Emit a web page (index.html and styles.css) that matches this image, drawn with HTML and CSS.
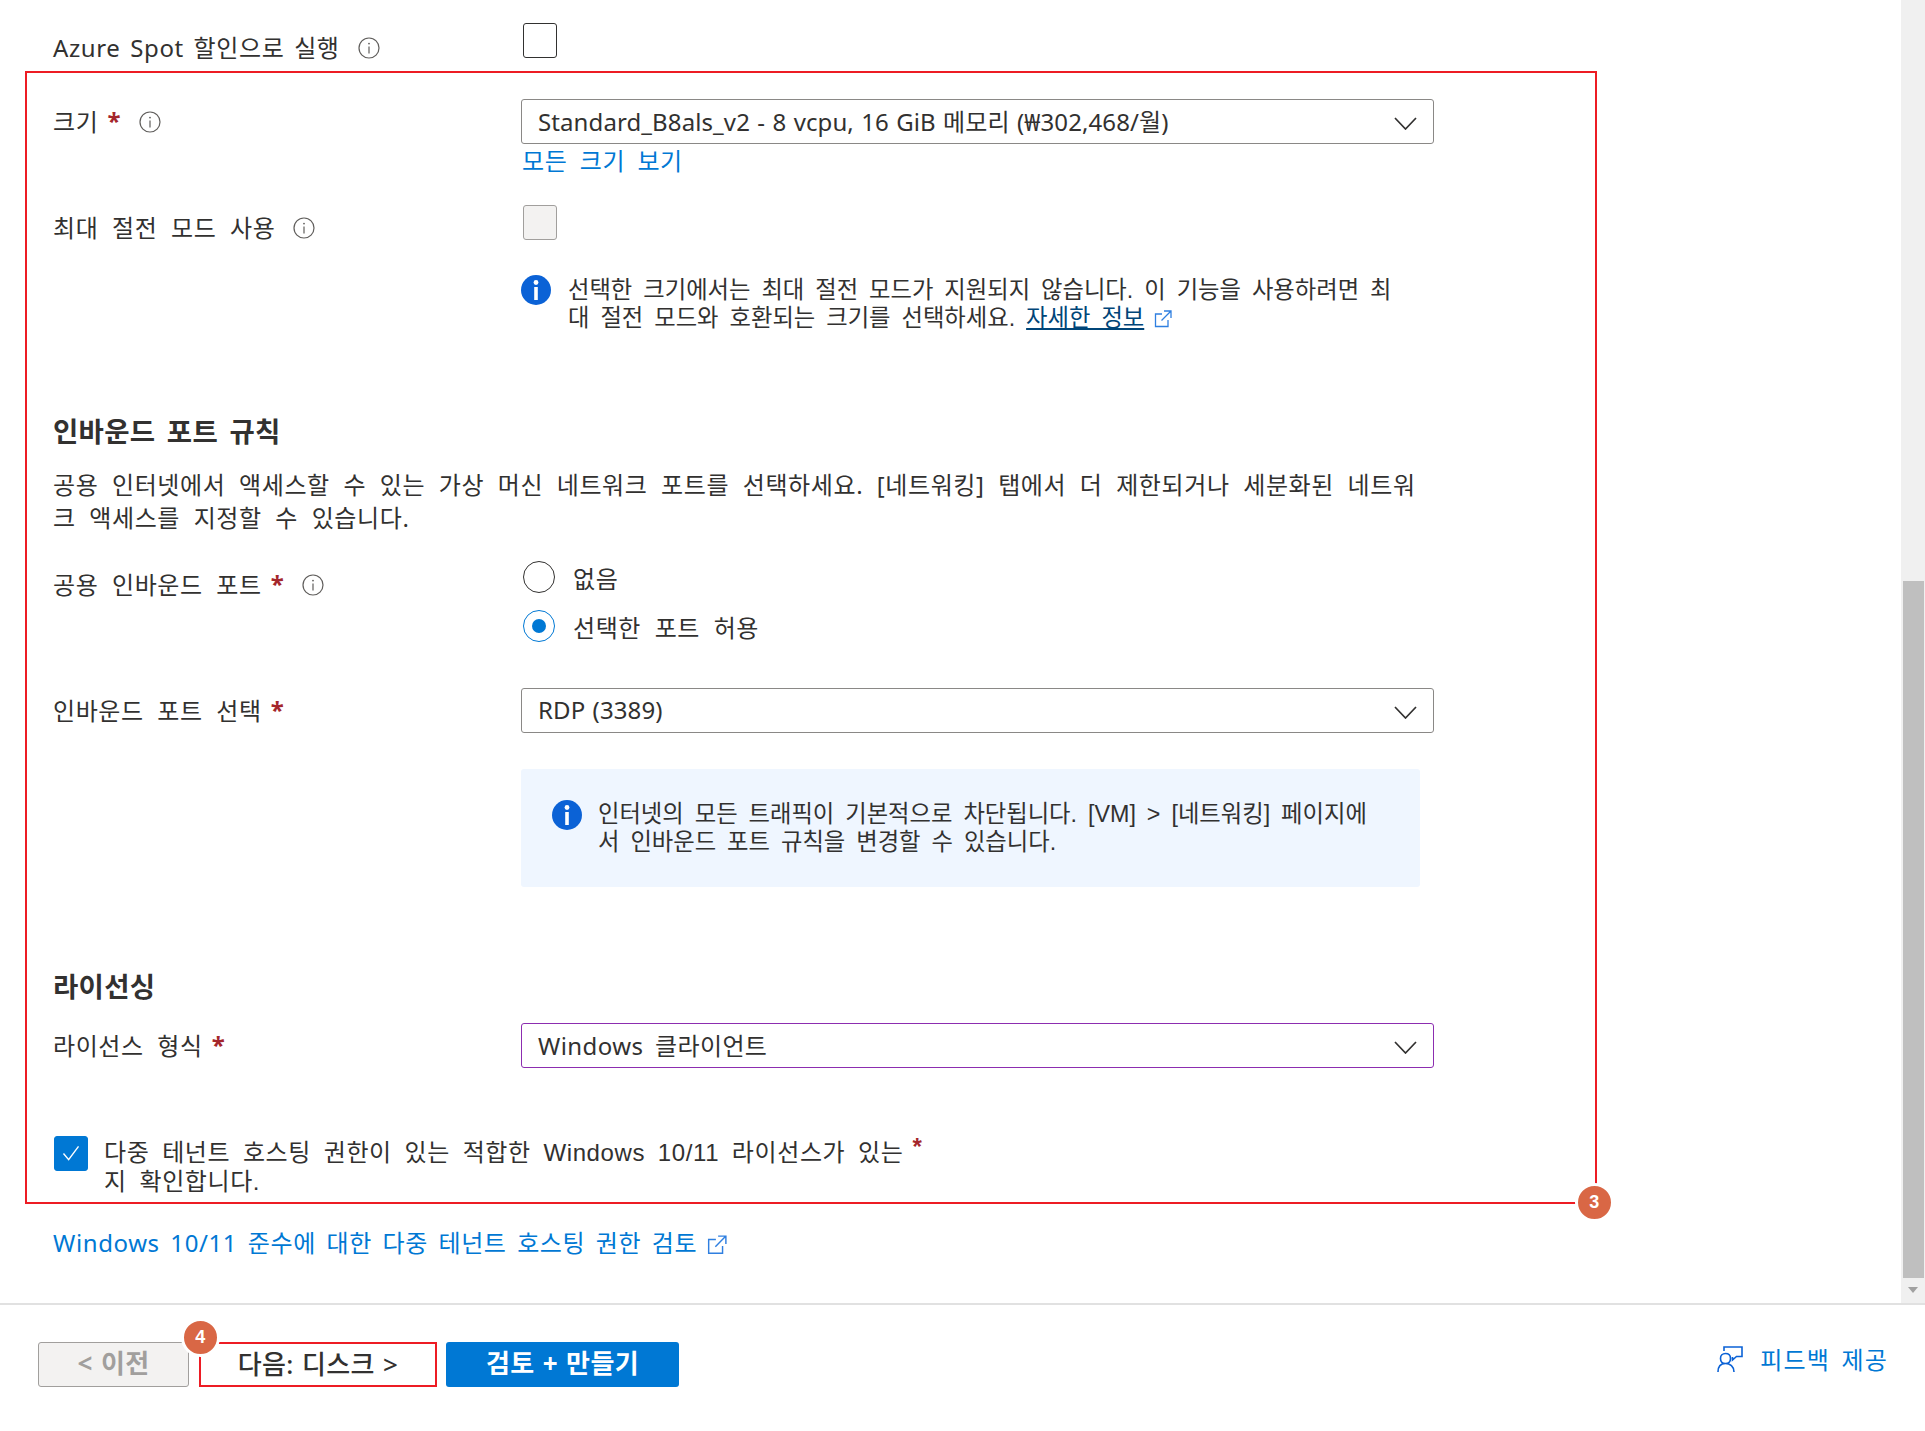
FILE: index.html
```html
<!DOCTYPE html>
<html lang="ko">
<head>
  <meta charset="UTF-8">
  <title>가상 머신 만들기</title>
  <link rel="stylesheet" href="styles.css">
</head>
<body>
  <svg class="icon-defs" width="0" height="0">
    <symbol id="tip" viewBox="0 0 22 22">
      <circle cx="11" cy="11" r="10" fill="none" stroke="#605e5c" stroke-width="1.2"/>
      <circle cx="11" cy="6.6" r="0.9" fill="#605e5c"/>
      <path d="M11 9.5V16.5" stroke="#605e5c" stroke-width="1.2"/>
    </symbol>
    <symbol id="chevron" viewBox="0 0 23 13">
      <path d="M1 1L11.500 12L22 1" fill="none" stroke="#323130" stroke-width="1.700"/>
    </symbol>
    <symbol id="info" viewBox="0 0 30 30">
      <circle cx="15" cy="15" r="15" fill="#0b62d6"/>
      <circle cx="15" cy="7.500" r="2.400" fill="#fff"/>
      <path d="M15 12V25" stroke="#fff" stroke-width="3.600"/>
    </symbol>
    <symbol id="external" viewBox="0 0 18 18">
      <path d="M8 4H1.500V16.500H14V10M10 1H17V8M17 1L7.500 10.500" fill="none" stroke="currentColor" stroke-width="1.300"/>
    </symbol>
  </svg>

  <div class="page">
    <main class="content">
      <div class="row row-spot">
        <div class="label">Azure Spot 할인으로 실행<svg class="tip"><use href="#tip"/></svg></div>
        <div class="field"><span class="check"></span></div>
      </div>

      <div class="row row-size">
        <div class="label">크기<span class="req">*</span><svg class="tip"><use href="#tip"/></svg></div>
        <div class="field">
          <div class="select">Standard_B8als_v2 - 8 vcpu, 16 GiB 메모리 (₩302,468/월)<svg class="chevron"><use href="#chevron"/></svg></div>
          <a class="link see-all">모든 크기 보기</a>
        </div>
      </div>

      <div class="row row-hibernate">
        <div class="label">최대 절전 모드 사용<svg class="tip"><use href="#tip"/></svg></div>
        <div class="field"><span class="check disabled"></span></div>
      </div>

      <div class="row row-note">
        <div></div>
        <div class="note">
          <svg class="info"><use href="#info"/></svg>
          <p>선택한 크기에서는 최대 절전 모드가 지원되지 않습니다. 이 기능을 사용하려면 최<br>대 절전 모드와 호환되는 크기를 선택하세요. <a class="more">자세한 정보</a><svg class="ext"><use href="#external"/></svg></p>
        </div>
      </div>

      <h2 class="heading heading-ports">인바운드 포트 규칙</h2>
      <p class="desc">공용 인터넷에서 액세스할 수 있는 가상 머신 네트워크 포트를 선택하세요. [네트워킹] 탭에서 더 제한되거나 세분화된 네트워<br>크 액세스를 지정할 수 있습니다.</p>

      <div class="row row-public">
        <div class="label">공용 인바운드 포트<span class="req">*</span><svg class="tip"><use href="#tip"/></svg></div>
        <div class="field radios">
          <div class="radio-line"><span class="radio"></span>없음</div>
          <div class="radio-line"><span class="radio on"></span>선택한 포트 허용</div>
        </div>
      </div>

      <div class="row row-select-port">
        <div class="label">인바운드 포트 선택<span class="req">*</span></div>
        <div class="field">
          <div class="select">RDP (3389)<svg class="chevron"><use href="#chevron"/></svg></div>
          <div class="banner">
            <svg class="info"><use href="#info"/></svg>
            <p>인터넷의 모든 트래픽이 기본적으로 차단됩니다. [VM] &gt; [네트워킹] 페이지에<br>서 인바운드 포트 규칙을 변경할 수 있습니다.</p>
          </div>
        </div>
      </div>

      <h2 class="heading heading-license">라이선싱</h2>

      <div class="row row-license">
        <div class="label">라이선스 형식<span class="req">*</span></div>
        <div class="field">
          <div class="select touched">Windows 클라이언트<svg class="chevron"><use href="#chevron"/></svg></div>
        </div>
      </div>

      <div class="confirm">
        <span class="check checked">
          <svg viewBox="0 0 34 34"><path d="M9 17.500L14.500 24L25 10" fill="none" stroke="#fff" stroke-width="1.500"/></svg>
        </span>
        <p>다중 테넌트 호스팅 권한이 있는 적합한 Windows 10/11 라이선스가 있는<span class="req req-up">*</span><br>지 확인합니다.</p>
      </div>

      <a class="link review-link">Windows 10/11 준수에 대한 다중 테넌트 호스팅 권한 검토<svg class="ext"><use href="#external"/></svg></a>

      <div class="callout"></div>
      <span class="badge badge-three">3</span>

      <div class="scrollbar">
        <div class="thumb"></div>
        <div class="arrow"></div>
      </div>
    </main>

    <footer class="footer">
      <button class="btn prev">&lt; 이전</button>
      <button class="btn next">다음: 디스크 &gt;</button>
      <button class="btn primary">검토 + 만들기</button>
      <a class="feedback">
        <svg viewBox="0 0 26 26" class="feedback-icon">
          <path d="M7 5V1H25V10.500H19.500L15.500 14V11M1 26C1 20.500 4 17.500 8.500 17.500C13 17.500 17 20.500 17 26M8.500 17.500C11.500 17.500 13.500 15.500 13.500 12.500C13.500 9.500 11.500 7.500 8.500 7.500C5.500 7.500 3.500 9.500 3.500 12.500C3.500 15.500 5.500 17.500 8.500 17.500Z" fill="none" stroke="#0b62d6" stroke-width="1.600"/>
        </svg>
        <span class="feedback-text">피드백 제공</span>
      </a>
      <span class="badge badge-four">4</span>
    </footer>
  </div>
</body>
</html>
```

FILE: styles.css
```css
* {
  box-sizing: border-box;
}

html, body {
  margin: 0;
  height: 100%;
  background-color: #fff;
}

body {
  font-family: "Noto Sans", "Noto Sans CJK KR", sans-serif;
  font-size: 24px;
  letter-spacing: 0.6px;
  word-spacing: 6.8px;
  color: #323130;
  overflow: hidden;
}

p, h2 {
  margin: 0;
}

.icon-defs {
  position: absolute;
}

.page {
  display: flex;
  flex-direction: column;
  height: 1431px;
}

.content {
  position: relative;
  height: 1303px;
  padding-left: 53px;
  overflow: hidden;
}

/* form rows */
.row {
  display: grid;
  grid-template-columns: 468px 913px;
}

.label {
  display: flex;
  align-items: center;
  height: 30px;
  padding-bottom: 4px;
  white-space: nowrap;
}

.req {
  color: #a4262c;
  font-weight: 700;
  margin-left: 9px;
}

.tip {
  width: 22px;
  height: 22px;
  margin-top: 4px;
  margin-left: 18px;
}

.row-spot {
  padding-top: 23px;
  height: 99px;
}

.row-spot .label {
  margin-top: 10px;
  word-spacing: 3px;
}

.row-spot .field {
  padding-left: 2px;
}

.row-size .label {
  margin-top: 8px;
}

.row-size {
  height: 106px;
}

.row-hibernate {
  height: 70px;
}

.row-hibernate .label {
  margin-top: 8px;
}

.row-hibernate .field {
  padding-left: 2px;
}

.check {
  display: block;
  width: 34px;
  height: 35px;
  border: 1px solid #323130;
  border-radius: 3px;
}

.check.disabled {
  background-color: #f3f2f1;
  border-color: #a19f9d;
}

.check.checked {
  background-color: #0078d4;
  border-color: #0078d4;
  flex: none;
}

.select {
  position: relative;
  display: flex;
  align-items: center;
  height: 45px;
  padding: 0 0 2px 16px;
  border: 1px solid #8a8886;
  border-radius: 3px;
  white-space: nowrap;
  letter-spacing: 0.1px;
  word-spacing: 1px;
}

.select.touched {
  border-color: #8c2db0;
  letter-spacing: 0.4px;
  word-spacing: 5px;
}

.chevron {
  position: absolute;
  right: 16px;
  top: 17px;
  width: 23px;
  height: 13px;
}

.link {
  color: #0078d4;
  display: block;
}

.see-all {
  margin-left: 1px;
  margin-top: 1px;
  line-height: 32px;
  word-spacing: 5.5px;
}

.row-note {
  height: 143px;
}

.note {
  display: flex;
  gap: 17px;
}

.note p, .banner p {
  font-family: "Liberation Sans", "Noto Sans CJK KR", sans-serif;
  font-size: 23.3px;
  letter-spacing: 0;
  word-spacing: 4.5px;
  line-height: 28px;
  white-space: nowrap;
}

.note p {
  margin-top: 1px;
}

.info {
  width: 30px;
  height: 30px;
  flex: none;
}

.more {
  color: #004578;
  text-decoration: underline;
}

.ext {
  width: 18px;
  height: 18px;
  margin-left: 10px;
  vertical-align: -2px;
  color: #2f7fe0;
}

.heading {
  font-size: 27.5px;
  font-weight: 700;
  letter-spacing: 0.3px;
  word-spacing: 4px;
  line-height: 32px;
}

.heading-ports {
  margin-top: -2px;
}

.desc {
  margin-top: 20px;
  line-height: 33px;
  white-space: nowrap;
}

.row-public {
  margin-top: 27px;
  height: 127px;
}

.row-public .label {
  margin-top: 9px;
}

.radios {
  padding-left: 2px;
  display: flex;
  flex-direction: column;
  gap: 17px;
}

.radio-line {
  display: flex;
  align-items: center;
  gap: 18px;
  height: 32px;
}

.radio {
  position: relative;
  width: 32px;
  height: 32px;
  border: 1px solid #323130;
  border-radius: 50%;
}

.radio.on {
  border-color: #0078d4;
}

.radio.on::after {
  content: "";
  position: absolute;
  left: 8px;
  top: 8px;
  width: 14px;
  height: 14px;
  border-radius: 50%;
  background-color: #0078d4;
}

.row-select-port .label {
  margin-top: 8px;
}

.banner {
  display: flex;
  gap: 16px;
  width: 899px;
  height: 118px;
  margin-top: 36px;
  padding: 31px 0 0 31px;
  background-color: #eff6ff;
  border-radius: 3px;
}

.banner p {
  margin-top: 0;
}

.heading-license {
  margin-top: 84px;
}

.row-license {
  margin-top: 20px;
}

.row-license .label {
  margin-top: 8px;
}

.confirm {
  display: flex;
  gap: 16px;
  margin-top: 68px;
  margin-left: 1px;
}

.confirm p {
  font-family: "Liberation Sans", "Noto Sans CJK KR", sans-serif;
  margin-top: 2px;
  line-height: 29px;
  white-space: nowrap;
  word-spacing: 5.5px;
}

.req-up {
  position: relative;
  top: -6px;
}

.review-link {
  margin-top: 31px;
  line-height: 32px;
  word-spacing: 3.8px;
}

.review-link .ext {
  width: 20px;
  height: 20px;
  vertical-align: -3px;
}

/* numbered red annotations from the guide */
.callout {
  position: absolute;
  left: 25px;
  top: 71px;
  width: 1572px;
  height: 1133px;
  border: 2px solid #ed1c24;
}

.badge {
  position: absolute;
  display: flex;
  align-items: center;
  justify-content: center;
  width: 39px;
  height: 39px;
  border: 3px solid #fff;
  border-radius: 50%;
  background-color: #d96745;
  color: #fff;
  font-family: "Liberation Sans", sans-serif;
  font-size: 18px;
  font-weight: 700;
}

.badge-three {
  left: 1575px;
  top: 1183px;
}

.badge-four {
  left: 181px;
  top: 13px;
}

.scrollbar {
  position: absolute;
  right: 0;
  top: 0;
  width: 24px;
  height: 1303px;
  background-color: #f0f0f0;
}

.thumb {
  position: absolute;
  left: 2px;
  top: 581px;
  width: 21px;
  height: 697px;
  background-color: #bfbfbf;
}

.arrow {
  position: absolute;
  left: 7px;
  top: 1287px;
  border-left: 5.5px solid transparent;
  border-right: 5.500px solid transparent;
  border-top: 6px solid #a0a0a0;
}

/* footer */
.footer {
  position: relative;
  display: flex;
  align-items: flex-start;
  height: 128px;
  padding: 37px 0 0 38px;
  border-top: 2px solid #e1e1e1;
}

.btn {
  height: 45px;
  font-family: inherit;
  font-size: 26px;
  letter-spacing: 0.4px;
  word-spacing: 1px;
  border-radius: 3px;
  white-space: nowrap;
  padding: 0 0 5px;
}

.prev {
  width: 151px;
  margin-right: 10px;
  color: #a19f9d;
  background-color: #f3f2f1;
  border: 1px solid #a19f9d;
  font-weight: 700;
}

.next {
  width: 238px;
  margin-right: 9px;
  color: #323130;
  background-color: #fff;
  border: 2px solid #ed1c24;
  border-radius: 0;
  font-weight: 500;
}

.primary {
  width: 233px;
  color: #fff;
  background-color: #0078d4;
  border: none;
  font-weight: 700;
}

.feedback {
  display: flex;
  align-items: center;
  gap: 17px;
  margin-left: auto;
  margin-right: 37px;
  color: #0078d4;
  line-height: 30px;
  white-space: nowrap;
  word-spacing: 4px;
  letter-spacing: 1.2px;
}

.feedback-text {
  margin-top: 3px;
}

.feedback-icon {
  width: 26px;
  height: 26px;
}
```
